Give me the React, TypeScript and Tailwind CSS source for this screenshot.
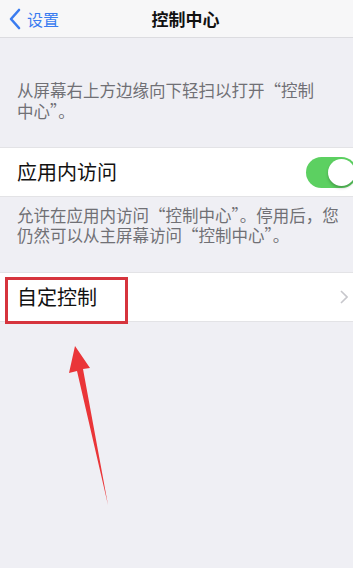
const font = { fontFamily: '"Noto Sans CJK SC", "Noto Sans", sans-serif' };

const Toggle = () => (
  <div className="w-[51px] h-[31px] rounded-full bg-[#5cd061] relative shrink-0 mr-[-4px]">
    <div className="absolute right-[2px] top-[2px] w-[27px] h-[27px] rounded-full bg-white shadow-[0_2px_3px_rgba(0,0,0,0.25)]" />
  </div>
);

const App = () => {
  return (
    <div
      className="w-[353px] h-[568px] bg-[#efeff4] relative overflow-hidden flex flex-col"
      style={font}
    >
      {/* nav */}
      <div className="h-[38px] bg-[#f7f7f8] border-b border-[#dcdce0] flex items-center relative shrink-0">
        <div className="flex items-center pl-[8px] text-[#3a7cf0]">
          <svg width="14" height="22" viewBox="0 0 14 22">
            <path d="M11 2 L3 11 L11 20" fill="none" stroke="#3a7cf0" strokeWidth="2.6" strokeLinecap="round" strokeLinejoin="round" />
          </svg>
          <span className="text-[16px] ml-[5px] leading-none">设置</span>
        </div>
        <div className="absolute left-0 right-0 pl-[18px] text-center text-[17px] font-semibold text-[#111] leading-none pointer-events-none">
          控制中心
        </div>
      </div>

      <div className="pt-[42px] pb-[25px] pl-[17px] text-[16.5px] leading-[21px] text-[#707075] whitespace-nowrap">
        从屏幕右上方边缘向下轻扫以打开“控制
        <br />
        中心”。
      </div>

      <div className="h-[50px] bg-white border-y border-[#e3e3e6] flex items-center justify-between pl-[17px]">
        <span className="text-[20px] text-[#111]">应用内访问</span>
        <Toggle />
      </div>

      <div className="pt-[8px] pb-[27px] pl-[17px] text-[16.5px] leading-[20px] text-[#707075] whitespace-nowrap">
        允许在应用内访问“控制中心”。停用后，您
        <br />
        仍然可以从主屏幕访问“控制中心”。
      </div>

      <div className="h-[50px] bg-white border-y border-[#e3e3e6] flex items-center justify-between pl-[17px] pr-[5px] relative">
        <span className="text-[20px] text-[#111]">自定控制</span>
        <svg width="8" height="14" viewBox="0 0 8 14">
          <path d="M1 1 L7 7 L1 13" fill="none" stroke="#c7c7cc" strokeWidth="1.6" />
        </svg>
        <div className="absolute left-[5px] top-[4px] w-[123px] h-[47px] border-[3px] border-[#d6343d]" />
      </div>

      <svg className="absolute left-0 top-0" width="353" height="568" viewBox="0 0 353 568">
        <path d="M75 346 L90 368 L83 369 L108 505 L77 371 L69 373 Z" fill="#ea3538" />
      </svg>
    </div>
  );
};

export default App;
